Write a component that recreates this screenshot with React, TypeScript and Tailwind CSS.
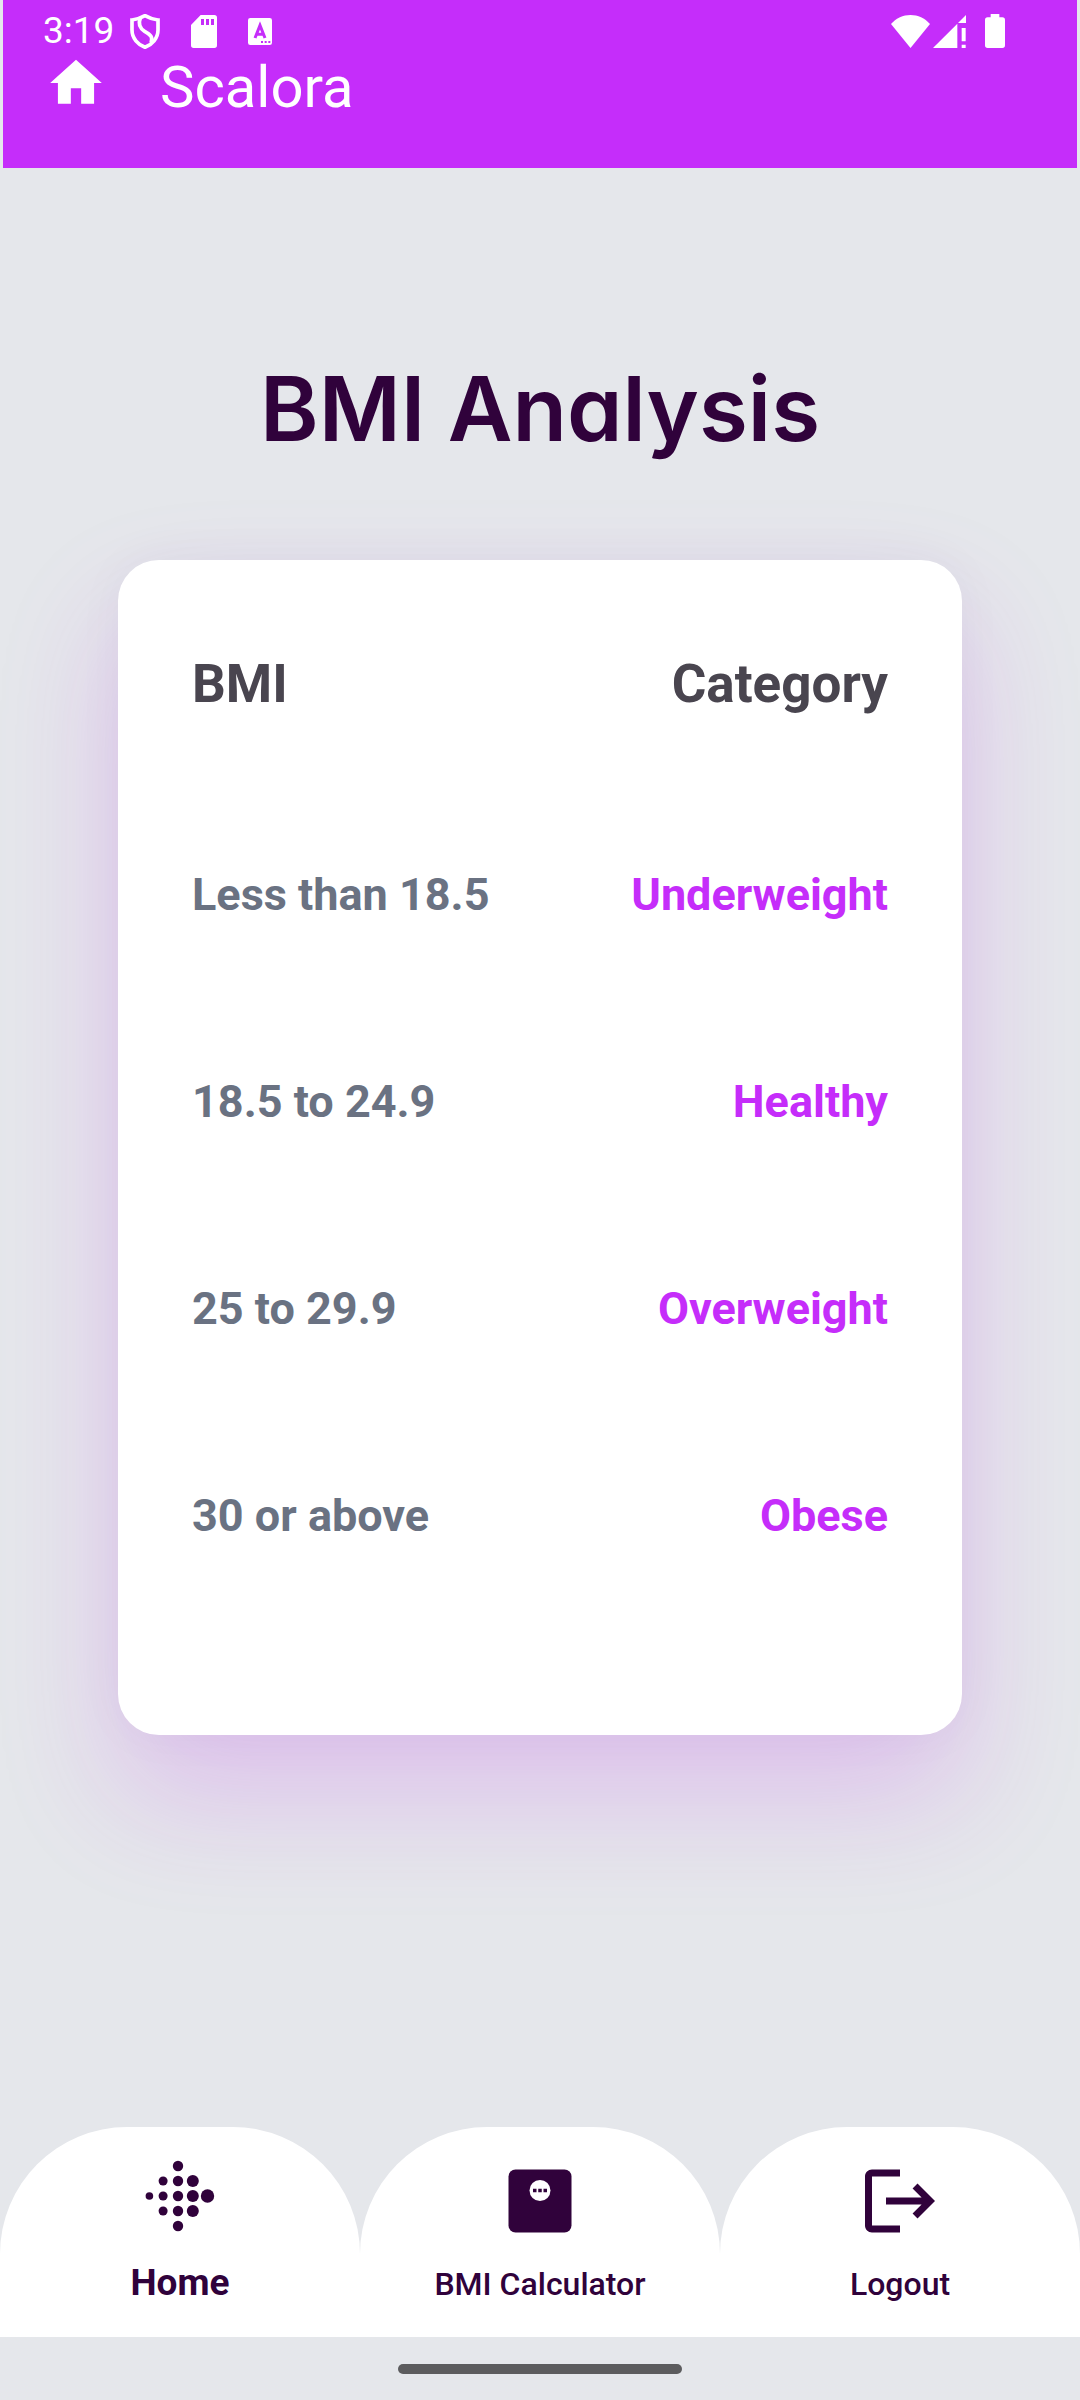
import type { ReactNode } from "react";

const rows = [
  { range: "Less than 18.5", category: "Underweight" },
  { range: "18.5 to 24.9", category: "Healthy" },
  { range: "25 to 29.9", category: "Overweight" },
  { range: "30 or above", category: "Obese" },
];

function ShieldIcon() {
  return (
    <svg viewBox="0 0 90 105" className="h-[35px] w-[30px]" fill="none" stroke="currentColor" aria-hidden="true">
      <path
        d="M45 5 C31 13 18 17 6 18 V48 C6 73 24 92 45 100 C66 92 84 73 84 48 V18 C72 17 59 13 45 5 Z"
        strokeWidth="11"
      />
      <path d="M31 12 C24 30 28 42 44 52 C62 62 70 70 63 87" strokeWidth="11" />
    </svg>
  );
}

function SdCardIcon() {
  return (
    <svg viewBox="0 0 78 99" className="h-[33px] w-[26px]" fill="currentColor" aria-hidden="true">
      <path
        fillRule="evenodd"
        d="M29 0 H70 Q78 0 78 8 V91 Q78 99 70 99 H8 Q0 99 0 91 V30 Z M30 12 V30 H39 V12 Z M45 12 V30 H54 V12 Z M60 12 V30 H69 V12 Z"
      />
    </svg>
  );
}

function KeyboardIcon() {
  return (
    <svg viewBox="0 0 72 81" className="h-[27px] w-[24px]" aria-hidden="true">
      <rect width="72" height="81" rx="7" fill="currentColor" />
      <g fill="none" stroke="#c52dfa" strokeWidth="9">
        <path d="M21 60 L36 22 L51 60 M27 49 H45" />
      </g>
      <path d="M39 69 h6 v6 h-6 z M50 69 h6 v6 h-6 z M61 69 h6 v6 h-6 z" fill="#c52dfa" />
    </svg>
  );
}

function WifiIcon() {
  return (
    <svg viewBox="0 0 117 99" className="h-[33px] w-[39px]" fill="currentColor" aria-hidden="true">
      <path d="M58.5 99 L0 27 C16 9 36 0 58.5 0 C81 0 101 9 117 27 Z" />
    </svg>
  );
}

function SignalIcon() {
  return (
    <svg viewBox="0 0 99 99" className="h-[33px] w-[33px]" fill="currentColor" aria-hidden="true">
      <path d="M0 99 L73 26 V99 Z M75 24 L99 0 V24 Z M86 39 H98 V79 H86 Z M86 89 H98 V99 H86 Z" />
    </svg>
  );
}

function BatteryIcon() {
  return (
    <svg viewBox="0 0 60 102" className="h-[34px] w-[20px]" fill="currentColor" aria-hidden="true">
      <path d="M17 0 H43 V10 H52 Q60 10 60 18 V94 Q60 102 52 102 H8 Q0 102 0 94 V18 Q0 10 8 10 H17 Z" />
    </svg>
  );
}

function HomeIcon() {
  return (
    <svg viewBox="0 0 24 24" className="size-[62px]" fill="currentColor" aria-hidden="true">
      <path d="M10 20v-6h4v6h5v-8h3L12 3 2 12h3v8z" />
    </svg>
  );
}

const dots = [
  [11.4, 37, 3.8],
  [25.1, 22, 4.5],
  [25.1, 37, 4.5],
  [25.1, 52, 4.5],
  [40, 7, 5.2],
  [40, 22, 5.2],
  [40, 37, 5.2],
  [40, 52, 5.2],
  [40, 67, 5.2],
  [54.8, 22, 6],
  [54.8, 37, 6],
  [54.8, 52, 6],
  [69.5, 37, 6.7],
];

function DotsIcon() {
  return (
    <svg viewBox="0 0 84 84" className="size-[84px]" fill="currentColor" aria-hidden="true">
      {dots.map(([cx, cy, r]) => (
        <circle key={`${cx}-${cy}`} cx={cx} cy={cy} r={r} />
      ))}
    </svg>
  );
}

function ScaleIcon() {
  return (
    <svg viewBox="0 0 24 24" className="size-[84px]" aria-hidden="true">
      <rect x="3" y="3" width="18" height="18" rx="2" fill="currentColor" />
      <circle cx="12" cy="9" r="3" fill="white" />
      <path d="M10 8.5h1v1h-1z M11.5 8.5h1v1h-1z M13 8.5h1v1h-1z" fill="currentColor" />
    </svg>
  );
}

function LogoutIcon() {
  return (
    <svg viewBox="0 0 24 24" className="size-[84px]" fill="currentColor" aria-hidden="true">
      <path d="M17 7l-1.41 1.41L18.17 11H8v2h10.17l-2.58 2.58L17 17l5-5zM4 5h8V3H4c-1.1 0-2 .9-2 2v14c0 1.1.9 2 2 2h8v-2H4V5z" />
    </svg>
  );
}

function Tab({ icon, label, active = false }: { icon: ReactNode; label: string; active?: boolean }) {
  return (
    <button
      type="button"
      aria-current={active ? "page" : undefined}
      className="flex flex-1 flex-col items-center gap-3 rounded-t-[127px] bg-white pt-8 pb-6"
    >
      {icon}
      <span className={active ? "text-[37px] leading-[56px] font-bold" : "text-[32px] leading-[58px] font-medium"}>
        {label}
      </span>
    </button>
  );
}

export default function App() {
  return (
    <div className="flex min-h-screen flex-col bg-gray-200 font-['Roboto',sans-serif] text-[#30023b]">
      <header className="mx-[3px] bg-[#c52dfa] pt-[10px] pb-[46px] text-white">
        <div className="flex h-[42px] items-center pr-[72px] pl-10">
          <span className="text-[37px] leading-[42px]">3:19</span>
          <div className="ml-4 flex items-center gap-[31px]">
            <ShieldIcon />
            <SdCardIcon />
            <KeyboardIcon />
          </div>
          <div className="ml-auto flex items-center">
            <WifiIcon />
            <div className="ml-[3px] flex items-center gap-[19px]">
              <SignalIcon />
              <BatteryIcon />
            </div>
          </div>
        </div>
        <div className="flex items-start gap-[53px] pl-[42px]">
          <button type="button" aria-label="Go to home">
            <HomeIcon />
          </button>
          <span className="text-[58px] leading-[70px]">Scalora</span>
        </div>
      </header>

      <main className="flex flex-col px-[118px] pt-[186px] pb-16">
        <h1 className="text-center font-['Inter',sans-serif] text-[89px] leading-[110px] font-semibold [font-feature-settings:'cv11']">
          BMI Analysis
        </h1>
        <section className="mt-24 rounded-[41px] bg-white px-[74px] pt-4 pb-[116px] shadow-[0_60px_120px_rgba(195,46,240,0.21),0_0_50px_rgba(60,20,100,0.04)]">
          <table className="w-full font-bold">
            <thead>
              <tr className="h-[215px] text-[53px] leading-[64px] text-[#49454f]">
                <th scope="col" className="text-left">BMI</th>
                <th scope="col" className="text-right">Category</th>
              </tr>
            </thead>
            <tbody>
              {rows.map((row) => (
                <tr key={row.range} className="h-[207px] text-[45px] leading-[54px]">
                  <td className="text-gray-500">{row.range}</td>
                  <td className="text-right text-[#c52dfa]">{row.category}</td>
                </tr>
              ))}
            </tbody>
          </table>
        </section>
      </main>

      <nav className="mt-auto flex" aria-label="Main">
        <Tab icon={<DotsIcon />} label="Home" active />
        <Tab icon={<ScaleIcon />} label="BMI Calculator" />
        <Tab icon={<LogoutIcon />} label="Logout" />
      </nav>
      <div className="flex h-[63px] items-center justify-center">
        <div className="h-[10px] w-[284px] rounded-full bg-[#5c5c5e]" />
      </div>
    </div>
  );
}
